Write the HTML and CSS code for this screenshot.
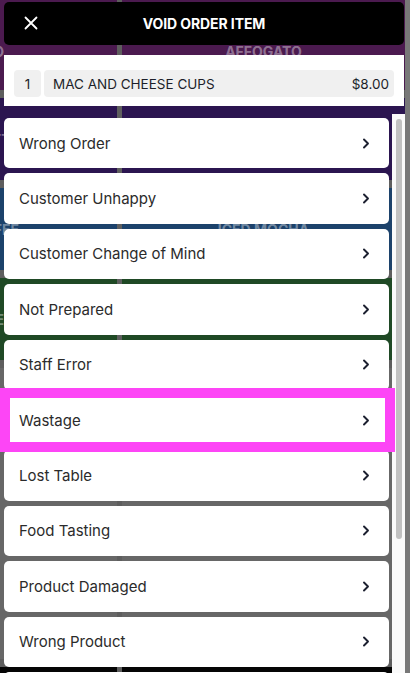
FILE: index.html
```html
<!DOCTYPE html>
<html lang="en">
<head>
  <meta charset="UTF-8" />
  <title>Void Order Item</title>
  <link rel="stylesheet" href="styles.css">
</head>
<body>

<!-- POS product grid (behind the modal) -->
<div class="pos-grid">
  <div class="tile purple left cut-far"><span>CAPPUCCINO</span></div>
  <div class="tile purple"><span>AFFOGATO</span></div>
  <div class="tile indigo left"><span>CHAI LATTE</span></div>
  <div class="tile indigo"><span>MOCHA</span></div>
  <div class="tile blue left"><span>ICED COFFEE</span></div>
  <div class="tile blue"><span>ICED MOCHA</span></div>
  <div class="tile green left cut-far"><span>ICED LATTE</span></div>
  <div class="tile green"><span>ICED CHAI</span></div>
  <div class="tile empty"></div>
  <div class="tile empty"></div>
  <div class="tile black"></div>
  <div class="tile black"></div>
</div>

<!-- Void modal -->
<div class="void-modal">
  <div class="modal-header">
    <button class="close-btn" aria-label="Close">
      <svg width="14" height="14" viewBox="0 0 14 14">
        <path d="M1.5 1.5 L12.5 12.5 M12.5 1.5 L1.5 12.5" stroke="#fff" stroke-width="1.8" stroke-linecap="round" fill="none"/>
      </svg>
    </button>
    <h1>VOID ORDER ITEM</h1>
  </div>

  <div class="item-panel">
    <div class="item-qty">1</div>
    <div class="item-line">
      <span>MAC AND CHEESE CUPS</span>
      <span>$8.00</span>
    </div>
  </div>

  <div class="list-wrap">
    <div class="reason-list" id="reasonList"></div>
    <div class="scrollbar"><div class="scroll-thumb"></div></div>
  </div>
</div>

<script>
  const REASONS = [
    "Wrong Order",
    "Customer Unhappy",
    "Customer Change of Mind",
    "Not Prepared",
    "Staff Error",
    "Wastage",
    "Lost Table",
    "Food Tasting",
    "Product Damaged",
    "Wrong Product",
    "Duplicate Item",
    "Training",
    "Other"
  ];

  const chevron = `
    <svg width="8" height="11" viewBox="0 0 8 11">
      <path d="M2 1.5 L6 5.5 L2 9.5" stroke="#1c2030" stroke-width="1.9" fill="none" stroke-linecap="round" stroke-linejoin="round"/>
    </svg>`;

  const list = document.getElementById("reasonList");
  REASONS.forEach((reason) => {
    const btn = document.createElement("button");
    btn.className = "reason" + (reason === "Wastage" ? " selected" : "");
    btn.innerHTML = `<span>${reason}</span>${chevron}`;
    list.appendChild(btn);
  });
</script>

</body>
</html>
```

FILE: styles.css
```css
body {
  margin: 0;
  padding: 0;
  background-color: #787878;
  font-family: Inter, "Noto Sans", sans-serif;
  overflow: hidden;
  height: 673px;
  position: relative;
}

/* background grid */
.pos-grid {
  width: 405px;
  height: 673px;
  display: grid;
  grid-template-columns: 117px 1fr;
  grid-template-rows: 90px 82px 82px 82px 291px 6px;
  column-gap: 5px;
  row-gap: 8px;
  background-color: #5e5e5e;
}
.tile {
  display: flex;
  align-items: center;
  justify-content: center;
  overflow: hidden;
  white-space: nowrap;
  font-weight: bold;
  font-size: 14px;
  color: rgba(255, 255, 255, 0.4);
}
.tile.left {
  justify-content: flex-end;
  padding-right: 98px;
}
.tile.left.cut-far {
  padding-right: 113px;
}
.tile.purple { background-color: #4b1a4f; padding-top: 12px; }
.tile.indigo { background-color: #2b1550; }
.tile.blue   { background-color: #1c426b; }
.tile.green  { background-color: #1f4925; }
.tile.empty  { background-color: #676767; }
.tile.black  { background-color: #050505; }

/* modal */
.void-modal {
  position: absolute;
  top: 0;
  left: 0;
  width: 405px;
  height: 673px;
  display: flex;
  flex-direction: column;
  padding-top: 2px;
  box-sizing: border-box;
  overflow: hidden;
}
.modal-header {
  margin-left: 4px;
  width: 400px;
  height: 43px;
  flex-shrink: 0;
  background-color: #000;
  border-radius: 5px;
  display: flex;
  align-items: center;
  justify-content: center;
  position: relative;
}
.modal-header h1 {
  margin: 0;
  color: #fff;
  font-size: 14px;
  font-weight: 700;
  letter-spacing: -0.1px;
}
.close-btn {
  position: absolute;
  left: 20px;
  top: 14px;
  background: none;
  border: none;
  padding: 0;
  width: 14px;
  height: 14px;
  cursor: pointer;
}

.item-panel {
  margin: 10px 0 0 4px;
  width: 400px;
  height: 51px;
  flex-shrink: 0;
  box-sizing: border-box;
  background-color: #fff;
  padding: 15px 10px 9px 10px;
  display: flex;
  gap: 3px;
}
.item-qty, .item-line {
  background-color: #f0f0f0;
  border-radius: 4px;
  font-size: 13.5px;
  color: #1c1f2a;
  display: flex;
  align-items: center;
}
.item-qty {
  width: 27px;
  justify-content: center;
}
.item-line {
  flex: 1;
  justify-content: space-between;
  padding: 0 5px 0 9px;
}

.list-wrap {
  margin-top: 8px;
  flex: 1;
  min-height: 0;
  display: flex;
}
.reason-list {
  flex: 1;
  padding: 4px 3px 0 4px;
  display: flex;
  flex-direction: column;
  gap: 5px;
}
.scrollbar {
  width: 13px;
  flex-shrink: 0;
  box-sizing: border-box;
  background-color: #fafafa;
  padding: 5px 3px 0 4px;
}
.scroll-thumb {
  height: 420px;
  background-color: #c1c1c1;
  border-radius: 3px;
}

.reason {
  flex-shrink: 0;
  height: 50.4px;
  width: 100%;
  background-color: #fff;
  border: none;
  border-radius: 5px;
  display: flex;
  align-items: center;
  justify-content: space-between;
  padding: 0 19px 0 15px;
  font-family: Inter, "Noto Sans", sans-serif;
  font-size: 15px;
  color: #2b2b2b;
  cursor: pointer;
  position: relative;
}
.reason.selected::after {
  content: "";
  position: absolute;
  top: -7px;
  bottom: -7px;
  left: -4px;
  right: -6px;
  border: 10px solid #fd45f6;
  z-index: 1;
}
```
